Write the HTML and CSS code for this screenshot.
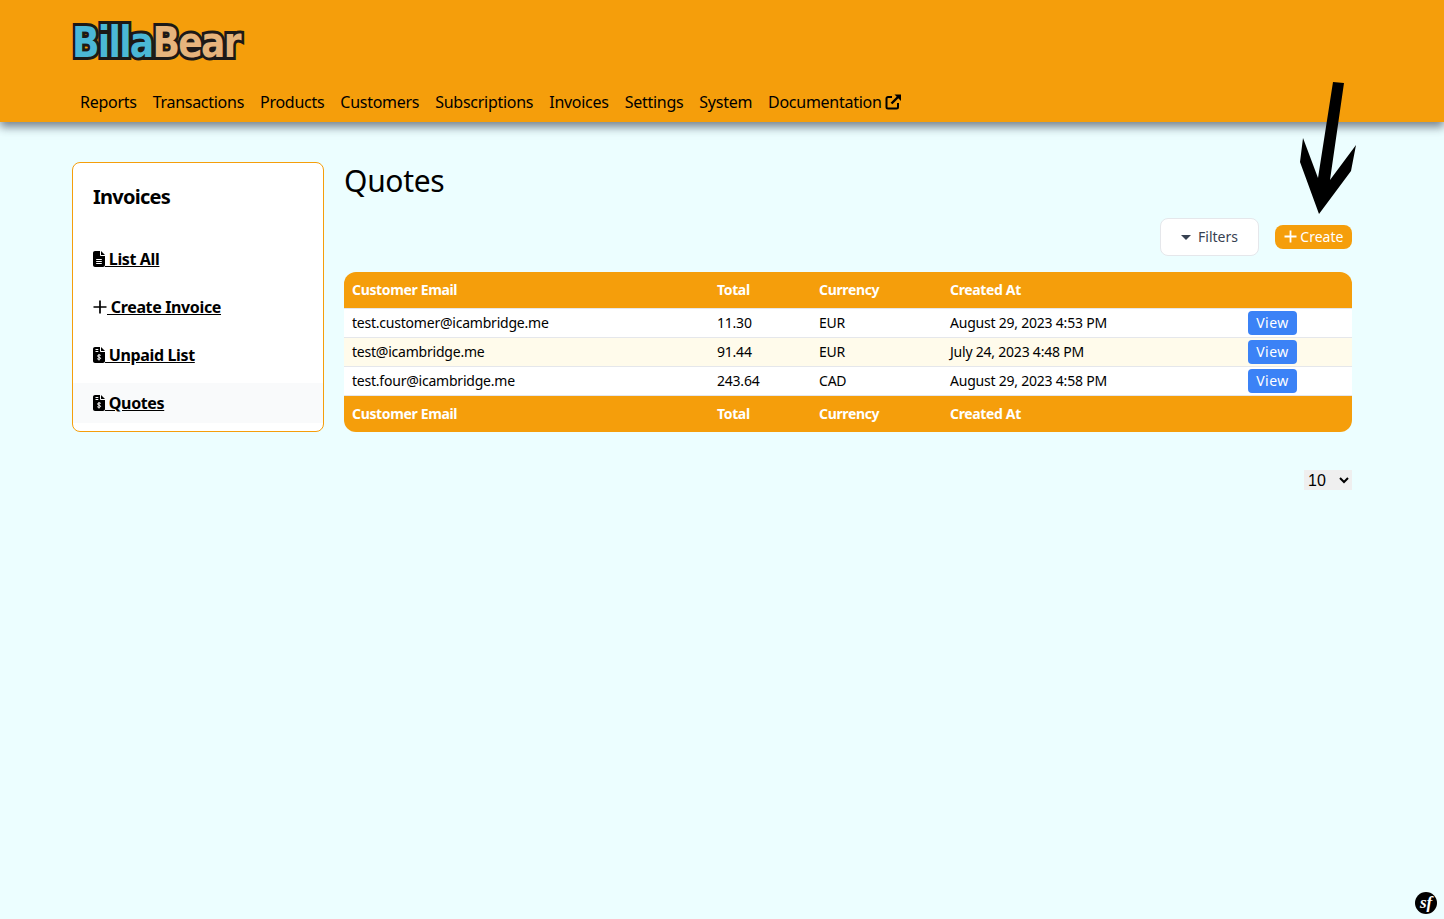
FILE: index.html
```html
<!DOCTYPE html>
<html>
<head>
    <title>Quotes</title>
    <link rel="stylesheet" href="styles.css">
</head>
<body>
    <header class="topbar">
        <div class="logo"><span class="logo-blue">Billa</span><span class="logo-tan">Bear</span></div>
        <nav class="mainnav">
            <a>Reports</a>
            <a>Transactions</a>
            <a>Products</a>
            <a>Customers</a>
            <a>Subscriptions</a>
            <a>Invoices</a>
            <a>Settings</a>
            <a>System</a>
            <a>Documentation <svg class="ext-icon" viewBox="0 0 16 16"><path d="M7 3H3a1.5 1.5 0 0 0-1.5 1.500v8.500A1.500 1.500 0 0 0 3 14.500h8.500A1.500 1.500 0 0 0 13 13V9" fill="none" stroke="currentColor" stroke-width="2"/><path d="M6.500 9.500 13 3" stroke="currentColor" stroke-width="2.400"/><path d="M9.500 0.500H16V7z" fill="currentColor"/></svg></a>
        </nav>
    </header>

    <div class="page">
        <aside class="sidebar">
            <h2>Invoices</h2>
            <ul>
                <li><a><svg class="doc-icon" viewBox="0 0 384 512"><path d="M64 0C28.700 0 0 28.700 0 64V448c0 35.300 28.700 64 64 64H320c35.300 0 64-28.700 64-64V160H256c-17.700 0-32-14.300-32-32V0H64zM256 0V128H384L256 0zM112 256H272c8.800 0 16 7.200 16 16s-7.200 16-16 16H112c-8.800 0-16-7.200-16-16s7.200-16 16-16zm0 64H272c8.800 0 16 7.200 16 16s-7.200 16-16 16H112c-8.800 0-16-7.200-16-16s7.200-16 16-16zm0 64H272c8.800 0 16 7.200 16 16s-7.200 16-16 16H112c-8.800 0-16-7.200-16-16s7.200-16 16-16z"/></svg> List All</a></li>
                <li><a><svg class="plus-icon" viewBox="0 0 14 14"><path d="M7 0.500V13.500M0.500 7H13.500" stroke="currentColor" stroke-width="1.700" fill="none"/></svg> Create Invoice</a></li>
                <li><a><svg class="doc-icon" viewBox="0 0 384 512"><path d="M64 0C28.700 0 0 28.700 0 64V448c0 35.300 28.700 64 64 64H320c35.300 0 64-28.700 64-64V160H256c-17.700 0-32-14.300-32-32V0H64zM256 0V128H384L256 0z"/><path d="M80 80H170M80 144H170M250 270c-20-22-100-26-106 16-5 44 100 30 100 74 0 42-80 38-110 14M192 230V432" fill="none" stroke="#fff" stroke-width="32"/></svg> Unpaid List</a></li>
                <li class="active"><a><svg class="doc-icon" viewBox="0 0 384 512"><path d="M64 0C28.700 0 0 28.700 0 64V448c0 35.300 28.700 64 64 64H320c35.300 0 64-28.700 64-64V160H256c-17.700 0-32-14.300-32-32V0H64zM256 0V128H384L256 0z"/><path d="M80 80H170M80 144H170M250 270c-20-22-100-26-106 16-5 44 100 30 100 74 0 42-80 38-110 14M192 230V432" fill="none" stroke="#fff" stroke-width="32"/></svg> Quotes</a></li>
            </ul>
        </aside>

        <main class="content">
            <h1>Quotes</h1>
            <div class="actions">
                <button class="filters-btn"><span class="caret"></span>Filters</button>
                <button class="create-btn"><svg class="create-plus" viewBox="0 0 13 13"><path d="M6.500 0.500V12.500M0.500 6.500H12.500" stroke="currentColor" stroke-width="1.800" fill="none"/></svg> Create</button>
            </div>
            <table class="list-table">
                <thead>
                    <tr>
                        <th class="col-email">Customer Email</th>
                        <th class="col-total">Total</th>
                        <th class="col-currency">Currency</th>
                        <th class="col-created">Created At</th>
                        <th></th>
                    </tr>
                </thead>
                <tbody>
                    <tr class="first">
                        <td>test.customer@icambridge.me</td>
                        <td>11.30</td>
                        <td>EUR</td>
                        <td>August 29, 2023 4:53 PM</td>
                        <td class="btn-cell"><button class="view-btn">View</button></td>
                    </tr>
                    <tr class="alt">
                        <td>test@icambridge.me</td>
                        <td>91.44</td>
                        <td>EUR</td>
                        <td>July 24, 2023 4:48 PM</td>
                        <td class="btn-cell"><button class="view-btn">View</button></td>
                    </tr>
                    <tr>
                        <td>test.four@icambridge.me</td>
                        <td>243.64</td>
                        <td>CAD</td>
                        <td>August 29, 2023 4:58 PM</td>
                        <td class="btn-cell"><button class="view-btn">View</button></td>
                    </tr>
                </tbody>
                <tfoot>
                    <tr>
                        <th>Customer Email</th>
                        <th>Total</th>
                        <th>Currency</th>
                        <th>Created At</th>
                        <th></th>
                    </tr>
                </tfoot>
            </table>
            <div class="pager">
                <select class="per-page">
                    <option>10</option>
                    <option>25</option>
                    <option>50</option>
                </select>
            </div>
        </main>
    </div>

    <!-- annotation drawn over the page -->
    <svg class="arrow" viewBox="0 0 1444 919"><polygon points="1333,82 1344,83 1330,180 1356,145 1351,171 1319,214 1300,162 1303,138 1318,178"/></svg>

    <div class="sf-badge">sf</div>
</body>
</html>
```

FILE: styles.css
```css
* {
    box-sizing: border-box;
}
body {
    margin: 0;
    min-height: 919px;
    background-color: #ecfeff;
    color: #000;
    font-family: "Noto Sans", sans-serif;
    font-size: 14px;
    letter-spacing: -0.22px;
}
.topbar {
    height: 122px;
    padding: 20px 0 0 72px;
    background: #f59e0b;
    box-shadow: 0 5px 9px rgba(55, 65, 81, 0.65);
}
.logo {
    height: 46px;
    font-family: "DejaVu Sans", sans-serif;
    font-size: 42px;
    font-weight: 700;
    line-height: 46px;
    letter-spacing: -2px;
    -webkit-text-stroke: 6px #1c1917;
    paint-order: stroke fill;
    transform: scaleX(0.86);
    transform-origin: left center;
}
.logo-blue {
    color: #4bb8d6;
}
.logo-tan {
    color: #e6b47c;
}
.mainnav {
    display: flex;
    gap: 16px;
    margin-top: 24px;
    padding-left: 8px;
    font-size: 16px;
    line-height: 24px;
    letter-spacing: -0.275px;
}
.ext-icon {
    width: 16px;
    height: 16px;
    vertical-align: -2px;
}
.page {
    display: flex;
    gap: 20px;
    width: 1280px;
    margin: 40px 0 0 72px;
}
.sidebar {
    flex: 0 0 252px;
    height: 270px;
    background: #fff;
    border: 1px solid #f59e0b;
    border-radius: 8px;
}
.sidebar h2 {
    margin: 20px 0 0 20px;
    font-size: 20px;
    line-height: 28px;
    font-weight: 700;
    letter-spacing: -0.75px;
}
.sidebar ul {
    display: flex;
    flex-direction: column;
    gap: 8px;
    margin: 28px 0 0;
    padding: 0;
    list-style: none;
}
.sidebar li {
    height: 40px;
    padding: 8px 20px;
    font-size: 16px;
    line-height: 24px;
    font-weight: 700;
    letter-spacing: -0.36px;
}
.sidebar li a {
    text-decoration: underline;
}
.sidebar li.active {
    background: #f9fafb;
}
.doc-icon {
    width: 12px;
    height: 16px;
    vertical-align: -2px;
}
.plus-icon {
    width: 14px;
    height: 14px;
    vertical-align: -1px;
}
.content {
    flex: 1;
}
.content h1 {
    margin: 0;
    padding-top: 1px;
    font-size: 30px;
    line-height: 36px;
    font-weight: 400;
    letter-spacing: -0.3px;
}
.actions {
    display: flex;
    justify-content: flex-end;
    align-items: center;
    gap: 16px;
    margin-top: 19px;
}
.filters-btn {
    width: 99px;
    height: 38px;
    padding: 0 0 2px;
    background: #fff;
    border: 1px solid #e5e7eb;
    border-radius: 8px;
    color: #374151;
    font-family: inherit;
    font-size: 14px;
}
.caret {
    display: inline-block;
    margin-right: 7px;
    border: 5px solid transparent;
    border-top: 5px solid #374151;
    border-bottom: 0;
    vertical-align: 2px;
}
.create-btn {
    width: 77px;
    height: 24px;
    padding: 0 0 2px;
    background: #f59e0b;
    border: 0;
    border-radius: 8px;
    color: #fff;
    font-family: inherit;
    font-size: 14px;
}
.create-plus {
    width: 13px;
    height: 13px;
    vertical-align: -1px;
}
.list-table {
    width: 100%;
    margin-top: 16px;
    border-collapse: separate;
    border-spacing: 0;
    table-layout: fixed;
}
.list-table th {
    height: 36px;
    padding: 0 8px 2px;
    background: #f59e0b;
    color: #fff;
    font-weight: 700;
    letter-spacing: -0.35px;
    text-align: left;
}
.list-table thead th:first-child {
    border-top-left-radius: 12px;
}
.list-table thead th:last-child {
    border-top-right-radius: 12px;
}
.list-table tfoot th:first-child {
    border-bottom-left-radius: 12px;
}
.list-table tfoot th:last-child {
    border-bottom-right-radius: 12px;
}
.col-email {
    width: 365px;
}
.col-total {
    width: 102px;
}
.col-currency {
    width: 131px;
}
.col-created {
    width: 298px;
}
.list-table td {
    height: 29px;
    padding: 0 8px 2px;
    background: #fff;
    border-bottom: 1px solid #e5e7eb;
}
.list-table tr.first td {
    height: 30px;
    border-top: 1px solid #e5e7eb;
}
.list-table td.btn-cell {
    padding-bottom: 0;
}
.list-table tr.alt td {
    background: #fffbeb;
}
.view-btn {
    display: block;
    width: 49px;
    height: 24px;
    padding: 0 0 1px;
    background: #3b82f6;
    border: 0;
    border-radius: 4px;
    color: #fff;
    font-family: inherit;
    font-size: 14px;
    letter-spacing: 0.5px;
}
.pager {
    display: flex;
    justify-content: flex-end;
    margin-top: 38px;
}
.per-page {
    width: 48px;
    height: 20px;
    background: #efefef;
    border: 0;
    border-radius: 0;
    color: #000;
    font-family: "Liberation Sans", sans-serif;
    font-size: 16px;
}
.arrow {
    position: absolute;
    top: 0;
    left: 0;
    width: 1444px;
    height: 919px;
    pointer-events: none;
}
.sf-badge {
    position: absolute;
    top: 892px;
    left: 1415px;
    width: 22px;
    height: 22px;
    background: #000;
    border-radius: 50%;
    color: #fff;
    font-family: "Liberation Serif", serif;
    font-size: 17px;
    font-style: italic;
    font-weight: 700;
    line-height: 21px;
    text-align: center;
}
```
